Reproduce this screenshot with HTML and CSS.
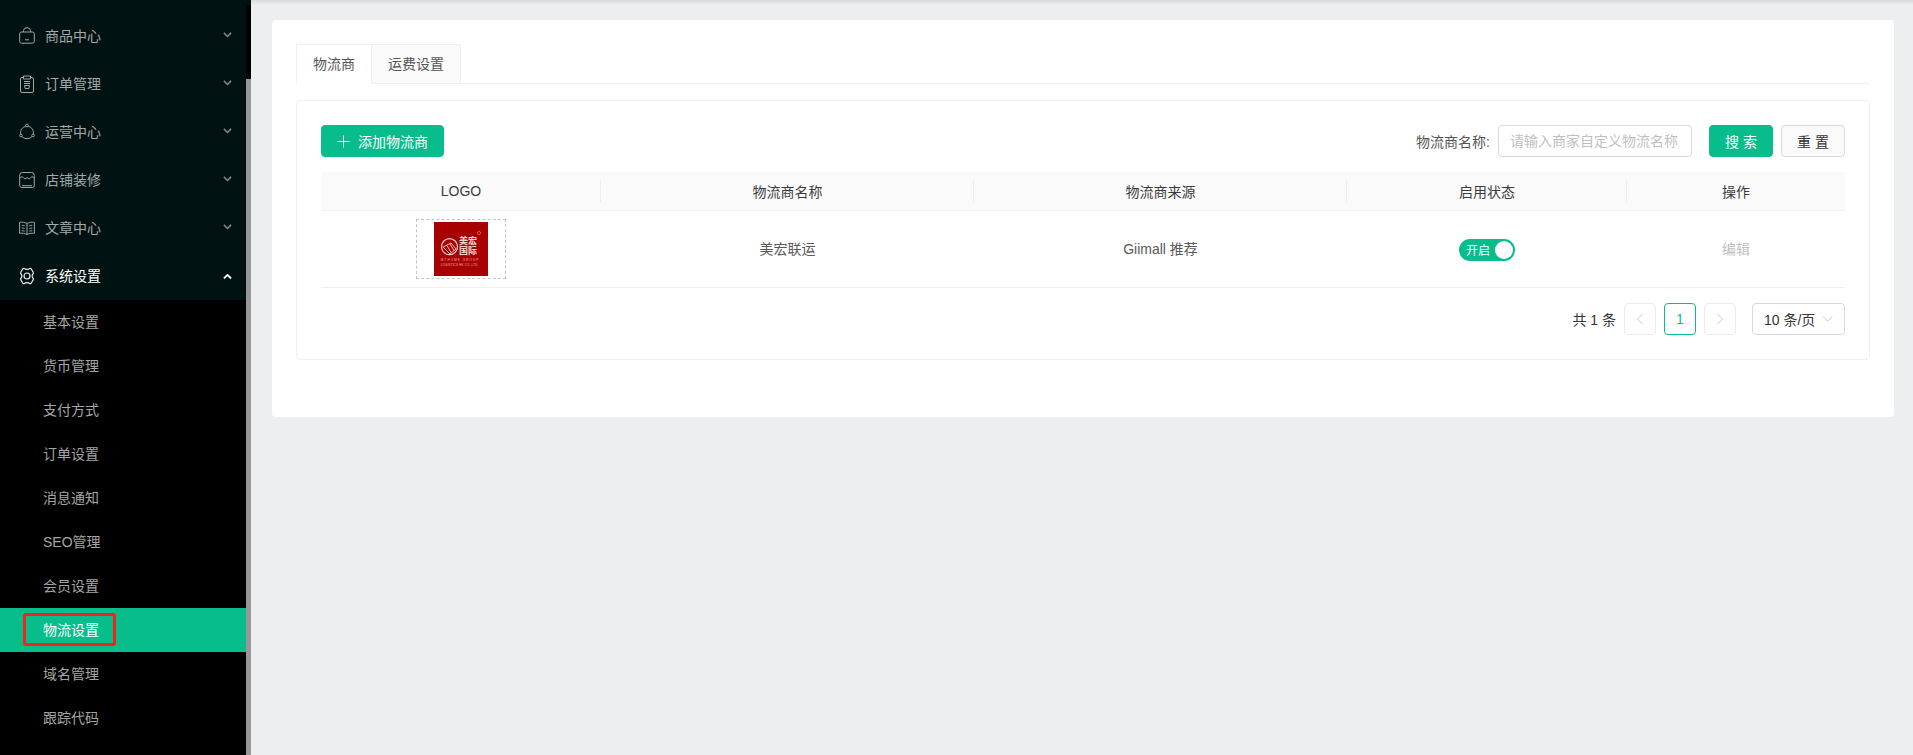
FILE: index.html
```html
<!DOCTYPE html>
<html lang="zh-CN">

<head>
    <meta charset="UTF-8">
    <meta name="viewport" content="width=device-width, initial-scale=1.0">
    <title>物流设置</title>
    <link rel="stylesheet" href="styles.css">
</head>

<body>
    <aside class="sidebar">
        <nav class="menu">
            <div class="menu-item">
                <svg class="menu-icon" viewBox="0 0 16 18"><path d="M2.500 5h11a1.800 1.800 0 0 1 1.800 1.800v7.600a1.800 1.800 0 0 1-1.800 1.800h-11a1.800 1.800 0 0 1-1.800-1.800V6.800A1.800 1.800 0 0 1 2.500 5zM4.500 5V3.700a3.500 3 0 0 1 7 0V5M6 12.800h4"/></svg>
                <span class="menu-label">商品中心</span>
                <svg class="chevron" viewBox="0 0 10 6"><path d="M1 1l4 4 4-4"/></svg>
            </div>
            <div class="menu-item">
                <svg class="menu-icon" viewBox="0 0 16 18"><path d="M4.500 2.500H3A1.500 1.500 0 0 0 1.500 4v12A1.500 1.500 0 0 0 3 17.500h10a1.500 1.500 0 0 0 1.500-1.500V4A1.500 1.500 0 0 0 13 2.500h-1.500M4.500 1h7v3h-7zM5 6.500h6M5 8.500h6M5.500 10.500h5l-.6 3H6.100zM7 15h.1M9 15h.1"/></svg>
                <span class="menu-label">订单管理</span>
                <svg class="chevron" viewBox="0 0 10 6"><path d="M1 1l4 4 4-4"/></svg>
            </div>
            <div class="menu-item">
                <svg class="menu-icon" viewBox="0 0 16 18"><circle cx="8" cy="2.500" r="1.400"/><circle cx="1.900" cy="12.500" r="1.300"/><circle cx="14.100" cy="12.500" r="1.300"/><path d="M6.700 3.300A6.500 6.500 0 0 0 1.700 11.200M9.300 3.300a6.500 6.500 0 0 1 5 7.900M3 13.700a7 7 0 0 0 10 0"/></svg>
                <span class="menu-label">运营中心</span>
                <svg class="chevron" viewBox="0 0 10 6"><path d="M1 1l4 4 4-4"/></svg>
            </div>
            <div class="menu-item">
                <svg class="menu-icon" viewBox="0 0 16 18"><path d="M3.500 1.500h9a2.800 2.800 0 0 1 2.800 2.800v10a2.200 2.200 0 0 1-2.200 2.200H2.900a2.200 2.200 0 0 1-2.200-2.200v-10a2.800 2.800 0 0 1 2.800-2.800zM.7 7.500c1.600-2.200 2.800-2.200 3.700-.7.800 1.300 2.300 1.300 3.600-.3 1.300 1.600 2.800 1.600 3.600.3.900-1.500 2.100-1.500 3.700.7M3 14.700h10"/></svg>
                <span class="menu-label">店铺装修</span>
                <svg class="chevron" viewBox="0 0 10 6"><path d="M1 1l4 4 4-4"/></svg>
            </div>
            <div class="menu-item">
                <svg class="menu-icon" viewBox="0 0 16 18"><path d="M8 4.500C6 3.300 3.200 3 .6 3.300v11c2.600-.3 5.400 0 7.400 1.200 2-1.200 4.800-1.500 7.400-1.200v-11C12.800 3 10 3.300 8 4.500zM8 4.500v11M2.700 6.300c1 0 2 .1 3 .4M2.700 9c1 0 2 .1 3 .4M2.700 11.700c1 0 2 .1 3 .4M13.300 6.300c-1 0-2 .1-3 .4M13.300 9c-1 0-2 .1-3 .4M13.300 11.700c-1 0-2 .1-3 .4"/></svg>
                <span class="menu-label">文章中心</span>
                <svg class="chevron" viewBox="0 0 10 6"><path d="M1 1l4 4 4-4"/></svg>
            </div>
            <div class="menu-item open">
                <svg class="menu-icon" viewBox="0 0 16 18"><path d="M5.600 1.700c.9.900 3.900.900 4.800 0 .5-.5 1.300-.4 1.700 0 .7 1.200 1.500 2.500 2.200 3.800.3.500 0 1.100-.4 1.500-1 .9-1 3.100 0 4 .4.400.7 1 .4 1.500-.7 1.300-1.500 2.600-2.200 3.800-.4.400-1.200.5-1.700 0-.9-.9-3.900-.9-4.800 0-.5.500-1.300.4-1.700 0-.7-1.200-1.500-2.500-2.200-3.800-.3-.5 0-1.100.4-1.500 1-.9 1-3.100 0-4-.4-.4-.7-1-.4-1.500.7-1.300 1.500-2.600 2.200-3.800.4-.4 1.200-.5 1.700 0z"/><circle cx="8" cy="9" r="3"/></svg>
                <span class="menu-label">系统设置</span>
                <svg class="chevron" viewBox="0 0 10 6"><path d="M1 5l4-4 4 4"/></svg>
            </div>
            <ul class="submenu">
                <li>基本设置</li>
                <li>货币管理</li>
                <li>支付方式</li>
                <li>订单设置</li>
                <li>消息通知</li>
                <li>SEO管理</li>
                <li>会员设置</li>
                <li class="active"><span class="marked">物流设置</span></li>
                <li>域名管理</li>
                <li>跟踪代码</li>
            </ul>
        </nav>
        <div class="sidebar-scroll">
            <div class="scroll-thumb"></div>
        </div>
    </aside>

    <main class="content">
        <section class="card">
            <div class="tabs">
                <div class="tab tab-active">物流商</div>
                <div class="tab">运费设置</div>
            </div>

            <div class="panel">
                <div class="toolbar">
                    <button class="btn btn-primary btn-add" type="button">
                        <svg class="plus" viewBox="0 0 14 14"><path d="M7 .5v13M.5 7h13"/></svg>
                        添加物流商
                    </button>
                    <form class="search">
                        <label class="search-label" for="carrier">物流商名称:</label>
                        <input class="search-input" id="carrier" type="text" placeholder="请输入商家自定义物流名称">
                        <button class="btn btn-primary btn-search" type="button">搜 索</button>
                        <button class="btn btn-reset" type="reset">重 置</button>
                    </form>
                </div>

                <table class="table">
                    <colgroup>
                        <col class="col-small">
                        <col class="col-wide">
                        <col class="col-wide">
                        <col class="col-small">
                        <col>
                    </colgroup>
                    <thead>
                        <tr>
                            <th>LOGO</th>
                            <th>物流商名称</th>
                            <th>物流商来源</th>
                            <th>启用状态</th>
                            <th>操作</th>
                        </tr>
                    </thead>
                    <tbody>
                        <tr>
                            <td>
                                <div class="logo-box">
                                    <svg class="logo" viewBox="0 0 54 54">
                                        <rect width="54" height="54" fill="#a80000"/>
                                        <circle cx="45" cy="11" r="1.600" fill="none" stroke="#d98080" stroke-width=".7"/>
                                        <circle cx="15.500" cy="24.700" r="8" fill="none" stroke="#f0d0d0" stroke-width="1.200"/>
                                        <path d="M9 25l8-4 5 6-6 5zM13 23.500l4 7M16 22l4 6.500" fill="none" stroke="#f0d0d0" stroke-width=".9"/>
                                        <text class="logo-cn" x="25" y="21.500">美宏</text>
                                        <text class="logo-cn" x="25" y="32">国际</text>
                                        <text class="logo-en" x="6.700" y="39" textLength="37.600">MYHOME GROUP</text>
                                        <text class="logo-en" x="6.700" y="43.800" textLength="37.600">LOGISTICS HK CO.,LTD.</text>
                                    </svg>
                                </div>
                            </td>
                            <td class="cell-text">美宏联运</td>
                            <td class="cell-text">Giimall 推荐</td>
                            <td>
                                <span class="switch">
                                    <span class="switch-text">开启</span>
                                    <span class="switch-knob"></span>
                                </span>
                            </td>
                            <td class="cell-text"><a class="link-disabled">编辑</a></td>
                        </tr>
                    </tbody>
                </table>

                <div class="pagination">
                    <span class="total">共 1 条</span>
                    <span class="page-btn page-arrow">
                        <svg viewBox="0 0 8 12"><path d="M6.500 1L1.500 6l5 5"/></svg>
                    </span>
                    <span class="page-btn page-current">1</span>
                    <span class="page-btn page-arrow">
                        <svg viewBox="0 0 8 12"><path d="M1.500 1l5 5-5 5"/></svg>
                    </span>
                    <span class="page-size">
                        10 条/页
                        <svg viewBox="0 0 12 8"><path d="M1 1l5 5.500L11 1"/></svg>
                    </span>
                </div>
            </div>
        </section>
    </main>
</body>

</html>
```

FILE: styles.css
```css
* {
    box-sizing: border-box;
}

html,
body {
    height: 100%;
}

body {
    margin: 0;
    display: flex;
    overflow: hidden;
    background-color: #edeef0;
    color: #333;
    font-family: "Liberation Sans", "Noto Sans CJK SC", sans-serif;
    font-size: 14px;
}

/* sidebar */
.sidebar {
    flex: 0 0 251px;
    display: flex;
    height: 100%;
}

.menu {
    flex: 1;
    padding-top: 12px;
    overflow: hidden;
    background-color: #001211;
}

.menu-item {
    display: flex;
    align-items: center;
    height: 48px;
    padding: 0 14px 0 19px;
    color: #a3a9a8;
}

.menu-item.open {
    color: #fff;
}

.menu-icon {
    flex: 0 0 16px;
    width: 16px;
    height: 18px;
    margin-right: 10px;
    fill: none;
    stroke: #9fa6a5;
    stroke-width: 1;
}

.open .menu-icon {
    stroke: #f2f2f2;
    stroke-width: 1.200;
}

.menu-label {
    flex: 1;
    padding-bottom: 2px;
}

.chevron {
    width: 9px;
    height: 5.400px;
    margin-top: -2px;
    fill: none;
    stroke: #7f8786;
    stroke-width: 1.700;
}

.open .chevron {
    margin-top: 1px;
    stroke: #fff;
    stroke-width: 2;
}

.submenu {
    margin: 0;
    padding: 0 0 20px;
    background-color: #000;
    list-style: none;
}

.submenu li {
    height: 44px;
    padding-left: 43px;
    line-height: 44px;
    color: #a6a6a6;
}

.submenu li.active {
    position: relative;
    background-color: #07bd8b;
    color: #fff;
}

/* red box drawn over the active row */
.marked::after {
    content: "";
    position: absolute;
    left: 23px;
    top: 5px;
    box-sizing: border-box;
    width: 93px;
    height: 33px;
    border: 3px solid #f5221b;
    border-radius: 3px;
}

.sidebar-scroll {
    flex: 0 0 5px;
    padding-top: 5px;
    background-color: #979797;
    box-shadow: inset 0 5px 0 #001211;
}

.scroll-thumb {
    height: 74px;
    background-color: #000;
}

/* main */
.content {
    flex: 1;
    min-width: 0;
    padding: 20px 19px 0 21px;
    background: linear-gradient(#d9d9da, #edeef0 5px);
}

.card {
    padding: 24px 24px 57px;
    background-color: #fff;
    border-radius: 4px;
}

.tabs {
    display: flex;
    height: 40px;
    margin-bottom: 16px;
    border-bottom: 1px solid #f0f0f0;
}

.tab {
    height: 40px;
    margin-right: -1px;
    padding: 0 16px;
    background-color: #fafafa;
    border: 1px solid #f0f0f0;
    line-height: 38px;
    color: #555;
}

.tab-active {
    background-color: #fff;
    border-bottom-color: #fff;
}

.panel {
    padding: 24px;
    border: 1px solid #f0f0f0;
    border-radius: 4px;
}

.toolbar {
    display: flex;
    justify-content: space-between;
    margin-bottom: 15px;
}

.btn {
    height: 32px;
    padding: 0;
    border: 1px solid #d9d9d9;
    border-radius: 4px;
    font-family: inherit;
    font-size: 14px;
}

.btn-primary {
    background-color: #07bd8b;
    border-color: #07bd8b;
    color: #fff;
}

.btn-add {
    display: flex;
    align-items: center;
    justify-content: center;
    width: 123px;
}

.plus {
    width: 13px;
    height: 13px;
    margin-right: 8px;
    fill: none;
    stroke: #fff;
    stroke-width: 1;
}

.search {
    display: flex;
    align-items: center;
}

.search-label {
    margin-right: 8px;
    color: #555;
}

.search-input {
    width: 194px;
    height: 32px;
    margin-right: 17px;
    padding: 0 11px;
    border: 1px solid #d9d9d9;
    border-radius: 4px;
    font-family: inherit;
    font-size: 14px;
}

.search-input::placeholder {
    color: #bfbfbf;
}

.btn-search,
.btn-reset {
    width: 64px;
}

.btn-reset {
    margin-left: 8px;
    background-color: #fafafa;
    color: #333;
}

.table {
    width: 100%;
    border-collapse: collapse;
    table-layout: fixed;
}

.col-small {
    width: 280px;
}

.col-wide {
    width: 373px;
}

.table th {
    position: relative;
    height: 38px;
    padding: 0;
    background-color: #fafafa;
    border-bottom: 1px solid #f0f0f0;
    font-weight: 400;
    color: #3a3a3a;
}

/* column dividers */
.table th + th::before {
    content: "";
    position: absolute;
    left: -1px;
    top: 8px;
    width: 1px;
    height: 22px;
    background-color: #eee;
}

.table td {
    height: 77px;
    padding: 8px 0;
    border-bottom: 1px solid #f0f0f0;
    text-align: center;
    color: #595959;
}

.table .cell-text {
    padding-bottom: 10px;
}

.logo-box {
    display: flex;
    align-items: center;
    justify-content: center;
    width: 90px;
    height: 60px;
    margin: 0 auto;
    border: 1px dashed #c4c4c4;
}

.logo {
    display: block;
    width: 54px;
    height: 54px;
}

.logo-cn {
    fill: #f3d6d6;
    font-size: 9px;
    font-weight: 700;
}

.logo-en {
    fill: #e9b8b8;
    font-size: 3px;
}

.switch {
    display: inline-flex;
    align-items: center;
    justify-content: space-between;
    width: 56px;
    height: 22px;
    margin-top: 2px;
    padding: 0 2px 0 7px;
    background-color: #07bd8b;
    border-radius: 11px;
    vertical-align: middle;
}

.switch-text {
    color: #fff;
    font-size: 12px;
}

.switch-knob {
    width: 18px;
    height: 18px;
    background-color: #fff;
    border-radius: 50%;
}

.link-disabled {
    color: #bfbfbf;
}

.pagination {
    display: flex;
    align-items: center;
    justify-content: flex-end;
    gap: 8px;
    margin-top: 15px;
}

.page-btn {
    display: flex;
    align-items: center;
    justify-content: center;
    width: 32px;
    height: 32px;
    border: 1px solid #ececec;
    border-radius: 4px;
}

.page-arrow svg {
    width: 8px;
    height: 12px;
    fill: none;
    stroke: #c9c9c9;
    stroke-width: 1;
}

.page-current {
    border-color: #07bd8b;
    color: #07bd8b;
}

.page-size {
    display: flex;
    align-items: center;
    justify-content: space-between;
    width: 93px;
    height: 32px;
    margin-left: 8px;
    padding: 0 11px;
    border: 1px solid #d9d9d9;
    border-radius: 4px;
}

.page-size svg {
    width: 11px;
    height: 8px;
    fill: none;
    stroke: #c4c4c4;
    stroke-width: 1;
}
```
